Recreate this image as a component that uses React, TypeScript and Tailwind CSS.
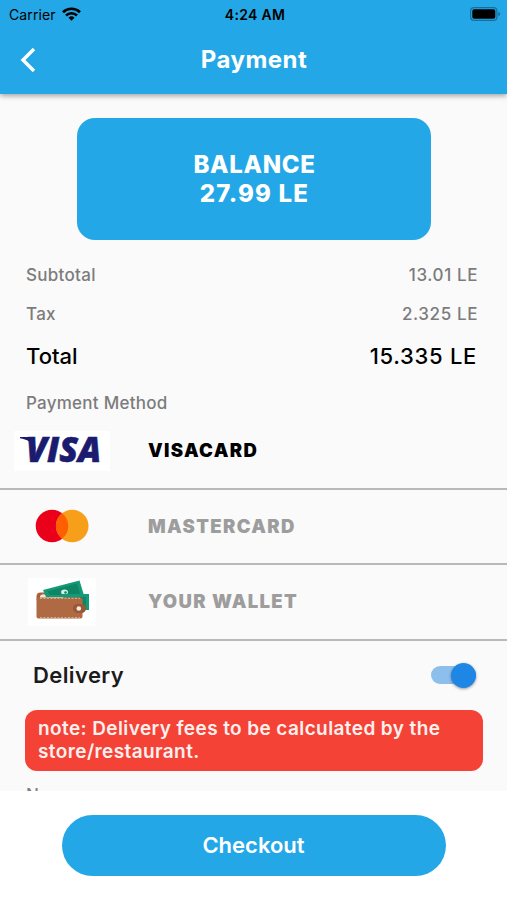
import { useState } from "react";

const summary = [
  { label: "Subtotal", amount: "13.01 LE" },
  { label: "Tax", amount: "2.325 LE" },
];

const methods = [
  { id: "visa", name: "VISACARD", logo: <VisaLogo /> },
  { id: "mastercard", name: "MASTERCARD", logo: <MastercardLogo /> },
  { id: "wallet", name: "YOUR WALLET", logo: <WalletLogo /> },
];

function VisaLogo() {
  return (
    <svg width="96" height="40" viewBox="0 0 96 40" className="overflow-visible bg-white">
      <text
        x="12"
        y="31.3"
        textLength="75"
        lengthAdjust="spacingAndGlyphs"
        className="fill-[#1b1b6f] stroke-[#1b1b6f] font-['Open_Sans'] text-[35px] font-extrabold italic"
        strokeWidth="0.6"
      >
        VISA
      </text>
      <path d="M6 6h13l3 13C18 11.200 13 8.200 6 7.200z" fill="#1b1b6f" />
    </svg>
  );
}

function MastercardLogo() {
  return (
    <svg width="96" height="40" viewBox="0 0 96 40">
      <circle cx="38" cy="20" r="16.300" fill="#eb001b" />
      <circle cx="58.200" cy="20" r="16.300" fill="#f79e1b" />
      <path d="M48.100 7.200a16.300 16.300 0 0 1 0 25.600a16.300 16.300 0 0 1 0-25.600z" fill="#ff5f00" />
    </svg>
  );
}

function WalletLogo() {
  return (
    <svg width="96" height="48" viewBox="0 0 96 48">
      <rect x="14" width="68" height="48" fill="#fff" />
      <rect x="22.500" y="14.500" width="12" height="10" rx="4" fill="#a5613d" />
      <path d="M26 18q2-3 6-1l3 4h-9z" fill="#f4e6da" />
      <path d="M29 12L65.500 2.500l5 16.500H32z" fill="#149a76" />
      <path d="M33 13.500L63 5.500l3.500 11.500H36z" fill="#0d8566" />
      <ellipse cx="50.500" cy="14" rx="3.500" ry="2.500" fill="#d5f0e4" />
      <circle cx="51.500" cy="14.500" r="1.300" fill="#0d8566" />
      <path d="M46 16h29v16H62z" fill="#149a76" />
      <path d="M64 19h8v10h-4z" fill="#0d8566" />
      <rect x="22.500" y="19.500" width="46" height="21" rx="2" fill="#b06a43" />
      <path d="M26 20.300h40M26 39.700h40" stroke="#dcb897" strokeWidth="1" strokeDasharray="2 1.500" />
      <path d="M67.500 26H63.500a4.500 4.500 0 0 0 0 9h4a4.500 4.500 0 0 0 0-9z" fill="#9a5735" />
      <circle cx="64.800" cy="30.500" r="2.300" fill="#f6ece4" />
    </svg>
  );
}

function StatusBar() {
  return (
    <div className="flex h-7 items-center justify-between pr-[6px] pl-[9px] text-black">
      <div className="flex w-[120px] items-center gap-[6px]">
        <span className="text-[14px] tracking-[0.1px]">Carrier</span>
        <svg width="19" height="14" viewBox="0 0 19 14" fill="none" stroke="#000" strokeWidth="2.600">
          <path d="M1 5.200a12.300 12.300 0 0 1 17 0" />
          <path d="M4 8.500a8 8 0 0 1 11 0" />
          <path d="M6.500 10.700a4.400 4.400 0 0 1 6 0L9.500 13.800z" fill="#000" stroke="none" />
        </svg>
      </div>
      <span className="text-[14px] font-semibold tracking-[0.3px]">4:24 AM</span>
      <div className="flex w-[120px] justify-end">
        <svg width="31" height="14" viewBox="0 0 31 14">
          <rect x="0.600" y="0.600" width="26.300" height="12.800" rx="3.500" fill="none" stroke="#1a6d98" strokeWidth="1.200" />
          <rect x="2.300" y="2.300" width="23" height="9.400" rx="1.800" fill="#000" />
          <path d="M28.300 4.700q1.900.7 1.900 2.300t-1.900 2.300z" fill="#1a6d98" />
        </svg>
      </div>
    </div>
  );
}

export default function App() {
  const [selected, setSelected] = useState("visa");
  const [delivery, setDelivery] = useState(true);

  return (
    <div className="flex h-[900px] w-[507px] flex-col overflow-hidden bg-[#fafafa] font-['Inter',sans-serif]">
      {/* App bar */}
      <header className="z-10 h-[94px] shrink-0 bg-[#23a7e6] shadow-[0_2px_5px_rgba(0,0,0,0.35)]">
        <StatusBar />
        <div className="grid h-16 grid-cols-[60px_1fr_60px] items-center">
          <button className="pl-5" aria-label="Back">
            <svg width="17" height="26" viewBox="0 0 17 26" fill="none" stroke="#fff" strokeWidth="3.400">
              <path d="M14 2L3 13l11 11" />
            </svg>
          </button>
          <h1 className="pl-px text-center text-[24px] font-bold tracking-[0.5px] text-white">Payment</h1>
        </div>
      </header>

      <main className="h-[697px] shrink-0 overflow-hidden pt-6">
        {/* Balance */}
        <div className="mx-auto flex h-[122px] w-[354px] flex-col items-center justify-center rounded-[18px] bg-[#23a7e6] pl-[2px] text-[24px] leading-[29px] font-extrabold text-white">
          <span className="tracking-[0.7px]">BALANCE</span>
          <span className="tracking-[1.2px]">27.99 LE</span>
        </div>

        {/* Summary */}
        <div className="mt-4 pr-[29px] pl-[26px]">
          {summary.map((row) => (
            <div
              key={row.label}
              className="flex h-[39px] items-center justify-between text-[17px] font-medium text-[#7c7c7c]"
            >
              <span className="tracking-[0.3px]">{row.label}</span>
              <span className="tracking-[0.6px]">{row.amount}</span>
            </div>
          ))}
          <div className="flex h-[45px] items-center justify-between text-[22px] font-medium text-black">
            <span>Total</span>
            <span className="pr-[1px] tracking-[0.7px]">15.335 LE</span>
          </div>
          <h2 className="flex h-[50px] items-center text-[17px] font-medium tracking-[0.25px] text-[#7c7c7c]">
            Payment Method
          </h2>
        </div>

        {/* Payment methods */}
        <div className="-mt-[15px]">
          {methods.map((method) => (
            <button
              key={method.id}
              onClick={() => setSelected(method.id)}
              className="flex h-[75.500px] w-full items-center border-b-2 border-[#b9b9b9] pl-[14px]"
            >
              {method.logo}
              <span
                className={`ml-[38px] pt-px text-[18.5px] font-black tracking-[1.35px] ${
                  selected === method.id ? "text-black" : "text-[#9d9d9d]"
                }`}
              >
                {method.name}
              </span>
            </button>
          ))}
        </div>

        {/* Delivery */}
        <div className="flex h-[69px] items-center justify-between pr-[31px] pl-[33px]">
          <span className="text-[22px] font-semibold tracking-[0.4px] text-[#1c1c1c]">Delivery</span>
          <button
            role="switch"
            aria-checked={delivery}
            aria-label="Delivery"
            onClick={() => setDelivery(!delivery)}
            className={`flex h-[18px] w-[45px] items-center rounded-full ${
              delivery ? "justify-end bg-[#8dbfec]" : "bg-gray-400"
            }`}
          >
            <span
              className={`size-[25px] rounded-full shadow-[0_1px_3px_rgba(0,0,0,0.4)] ${
                delivery ? "bg-[#1e86e5]" : "bg-white"
              }`}
            />
          </button>
        </div>
        <p className="ml-[25px] h-[61px] w-[458px] rounded-[12px] bg-[#f44336] px-[13px] pt-[7px] text-[19px] leading-[23px] font-semibold tracking-[0.4px] text-[#fff0ee]">
          note: Delivery fees to be calculated by the store/restaurant.
        </p>
        <p className="mt-[14px] pl-[26px] text-[17px] leading-[20px] font-medium text-[#808080]">Name</p>
      </main>

      {/* Checkout */}
      <footer className="flex flex-1 justify-center bg-white pt-[24px]">
        <button className="h-[61px] w-[384px] rounded-full bg-[#23a7e6] text-[22px] font-semibold text-white">
          Checkout
        </button>
      </footer>
    </div>
  );
}
